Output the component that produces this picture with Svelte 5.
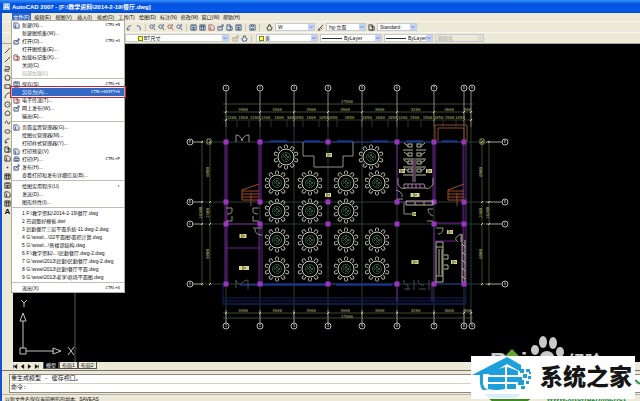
<script>
  const menus = ['文件(F)', '编辑(E)', '视图(V)', '插入(I)', '格式(O)', '工具(T)', '绘图(D)', '标注(N)', '修改(M)', '窗口(W)', '帮助(H)'];

  const fileMenu = [
    [
      { label: '新建(N)...', key: 'CTRL+N', icon: 'page' },
      { label: '新建图纸集(W)...' },
      { label: '打开(O)...', key: 'CTRL+O', icon: 'open' },
      { label: '打开图纸集(E)...' },
      { label: '加载标记集(K)...', icon: 'mark' },
      { label: '关闭(C)' },
      { label: '局部加载(L)', off: true }
    ],
    [
      { label: '保存(S)', key: 'CTRL+S', icon: 'save' },
      { label: '另存为(A)...', key: 'CTRL+SHIFT+S', active: true },
      { label: '电子传递(T)...', icon: 'mark' },
      { label: '网上发布(W)...', icon: 'open' },
      { label: '输出(E)...' }
    ],
    [
      { label: '页面设置管理器(G)...', icon: 'page' },
      { label: '绘图仪管理器(M)...' },
      { label: '打印样式管理器(Y)...' },
      { label: '打印预览(V)', icon: 'page' },
      { label: '打印(P)...', key: 'CTRL+P', icon: 'print' },
      { label: '发布(H)...', icon: 'open' },
      { label: '查看打印和发布详细信息(B)...' }
    ],
    [
      { label: '绘图实用程序(U)', key: '▸' },
      { label: '发送(D)...' },
      { label: '图形特性(I)...' }
    ],
    [
      { label: '1 F:\\教学资料\\2014-2-19\\餐厅.dwg' },
      { label: '2 已调整好模板.dwt' },
      { label: '3 民勤餐厅三层平面系统-11.dwg-2.dwg' },
      { label: '4 G:\\wsw\\...\\02平面图\\面积计算.dwg' },
      { label: '5 G:\\wsw\\...\\售楼部结构.dwg' },
      { label: '6 F:\\教学资料\\...\\民勤餐厅.dwg-2.dwg' },
      { label: '7 G:\\wsw\\2013\\民勤\\民勤餐厅.dwg-2.dwg' },
      { label: '8 G:\\wsw\\2013\\民勤\\餐厅平面.dwg' },
      { label: '9 G:\\wsw\\2013\\老李\\商场平面图.dwg' }
    ],
    [{ label: '退出(X)', key: 'CTRL+Q' }]
  ];

  const icons = {
    page: 'M1 1H5L7 3V7H1Z M3 3V7',
    open: 'M1 3H6V7H1Z M3 5L7 1M5 1H7V3',
    mark: 'M1 1H5V7H1Z M3 3H7V7H3',
    save: 'M1 1H7V7H1Z M3 1V3H5V1 M3 7V5H5V7',
    print: 'M2 3V1H6V3 M1 3H7V6H1Z M2 5H6',
    undo: 'M2 7Q1 2 6 2M2 7L1 5M2 7L4 6',
    redo: 'M2 2Q7 2 6 7',
    zoom: 'M1 3A2 2 0 1 1 5 3A2 2 0 1 1 1 3M5 4L7 7M6 0V3',
    pan: 'M2 7L1 4L3 3V1L5 1V3L7 4L6 7Z',
    table: 'M1 1H7V7H1Z M3 1V7M5 1V7M1 3H7',
    calc: 'M1 1H7V7H1Z M2 2H6M2 4H6M2 6H6M4 4V7',
    pen: 'M1 7L7 1M1 7H4M4 4L6 6',
    line: 'M1 7L7 1',
    pline: 'M1 2H6V5H1V7H6',
    poly: 'M4 1L7 3L6 7H2L1 3Z',
    rect: 'M1 2H7V6H1Z',
    arc: 'M1 7Q2 1 7 1',
    circle: 'M1 4A3 3 0 1 1 7 4A3 3 0 1 1 1 4M4 4H5',
    cloud: 'M2 6Q0 4 2 2Q4 0 6 2Q8 4 6 6Z',
    spline: 'M1 5Q3 0 4 4T7 3',
    ellipse: 'M1 4A3 2 0 1 1 7 4A3 2 0 1 1 1 4',
    point: 'M4 3V5M3 4H5'
  };

  const standardTools = [
    ['undo', 'redo'],
    ['zoom', 'zoom', 'zoom', 'zoom'],
    ['calc', 'table', 'page', 'open', 'mark', 'calc'],
    ['save']
  ];
  const drawTools = ['line', 'line', 'pline', 'poly', 'rect', 'arc', 'circle', 'cloud', 'spline', 'ellipse', 'undo', 'mark', 'page', 'point', 'table', 'calc', 'page', 'table'];

  // column axes and row axes of the plan
  const cols = [226, 260, 294, 328, 362, 397, 434, 464, 471];
  const rows = [142, 202, 224, 284];
  const colNames = ['1', '2', '3', '4', '5', '6', '7', '8', '9'];
  const rowNames = ['E', 'D', 'C', 'A'];
  const spans = ['3900', '3900', '3900', '3900', '3900', '4200', '3600', '500'];
  const vSpans = ['6900', '2400', '6900'];
  const fine = [
    [226, 237, '1200'], [237, 249, '1500'], [249, 260, '1200'], [260, 271, '1200'], [271, 287, '1800'],
    [287, 294, '900'], [294, 303, '1050'], [303, 319, '1800'], [319, 328, '1050'], [328, 337, '1050'],
    [337, 362, '2850'], [362, 372, '1050'], [372, 388, '1800'], [388, 397, '1050'], [397, 408, '1200'],
    [408, 421, '1500'], [421, 434, '1500'], [434, 443, '1050'], [443, 456, '1500'], [456, 464, '1050']
  ];
  const pillars = rows.flatMap((y) => [226, 260, 328, 397, 434, 464].map((x) => [x, y]));
  const tables = [
    [286, 157], [371, 157],
    ...[183, 240, 269].flatMap((y) => [277, 310, 346, 377].map((x) => [x, y])),
    [277, 211], [310, 211], [346, 211]
  ];
  const chairs = [0, 36, 72, 108, 144, 180, 216, 252, 288, 324];
  const stalls = [146, 155, 163, 171];
  const rooms = [
    [329, 155, 6], [328, 195, 6], [243, 236, 7], [244, 268, 10], [402, 171, 6], [429, 171, 6],
    [415, 195, 9], [414, 214, 4], [415, 262, 7], [450, 232, 6], [454, 262, 6]
  ];
</script>

{#snippet icon(name, tone)}
  <svg class="icon {tone}" viewBox="0 0 8 8" aria-hidden="true"><path d={icons[name]} /></svg>
{/snippet}

{#snippet combo(label, value, size, mark, off)}
  <label class="combo {size}">
    <select aria-label={label} class={mark} disabled={off}><option>{value}</option></select>
    {#if mark === 'swatch'}<i class="chip"></i>{/if}
    {#if mark === 'stroke'}<i class="dash"></i>{/if}
    <svg class="arrow" viewBox="0 0 6 8" aria-hidden="true"><path d="M1 3L3 5L5 3" /></svg>
  </label>
{/snippet}

<div class="window">
  <header class="title">
    <svg class="app" viewBox="0 0 8 8" aria-hidden="true"><path d="M0 0H8V8H0Z" fill="#8fb4e6" /><path d="M1 7L4 1L7 7M2 5H6" fill="none" stroke="#fff" /></svg>
    <span>AutoCAD 2007 - [F:\教学资料\2014-2-19\餐厅.dwg]</span>
  </header>

  <nav class="menubar">
    {#each menus as name, i}
      <button class:open={i === 0}>{name}</button>
    {/each}
  </nav>

  <div class="bar">
    {#each standardTools as group}
      <div class="group">
        {#each group as name, i}{@render icon(name, i % 4 === 2 ? 'red' : 'blue')}{/each}
      </div>
    {/each}
    <div class="styles">
      {@render icon('pan', 'dark')}{@render combo('文字样式', 'W', 'small', '', false)}
      {@render icon('pen', 'dark')}{@render combo('标注样式', 'hg-立面', 'small', '', false)}
      {@render icon('mark', 'dark')}{@render combo('表格样式', 'Standard', 'small', '', false)}
    </div>
  </div>

  <div class="bar second">
    {@render combo('图层', 'BT尺寸', 'layer', 'swatch', false)}
    <div class="group">{@render icon('open', 'dim')}{@render icon('pan', 'blue')}</div>
    {@render combo('颜色', '黄', 'medium', 'swatch', false)}
    {@render combo('线型', 'ByLayer', 'medium', 'stroke', false)}
    {@render combo('线宽', 'ByLayer', 'normal', 'stroke', false)}
    {@render combo('打印样式', '随颜色', 'normal', '', true)}
  </div>

  <main class="work">
    <aside class="tools">
      {#each drawTools as name}
        <button aria-label={name}>{@render icon(name, 'dark')}</button>
      {/each}
      <button aria-label="多行文字">A</button>
    </aside>

    <svg class="plan" viewBox="13 44 627 318" role="img" aria-label="餐厅平面图">
      <g class="ucs">
        <path class="faint" d="M75 44V362" />
        <path d="M20 348H26V354H20ZM23 348V321M26 351H54M20 321L23 313L26 321ZM53 348V354L61 351Z" />
        <path d="M21 300L24 303L27 300M24 303V307M68 347L74 355M74 347L68 355" />
      </g>

      <g class="axis">
        {#each cols as x}<path d="M{x} 127V325" />{/each}
        {#each rows as y}<path d="M195 {y}H500" />{/each}
      </g>

      <g class="dims">
        <path d="M223 104H473M223 112H473M223 313H473M223 318H473M202 140V286M210 140V286M482 140V286M489 140V286" />
        <path class="soft" d="M223 120H473" />
        {#each cols as x, i}
          <path class="bright" d="M{x} 91V127M{x} 310V323" />
          <path class="tick" d="M{x - 1} 113L{x + 1} 111M{x - 1} 121L{x + 1} 119M{x - 1} 314L{x + 1} 312" />
          <circle cx={i === 8 ? 472 : x} cy="88" r="3" />
          <circle cx={i === 8 ? 472 : x} cy="326" r="3" />
          <text class="name" x={i === 8 ? 472 : x} y="89">{colNames[i]}</text>
          <text class="name" x={i === 8 ? 472 : x} y="327">{colNames[i]}</text>
        {/each}
        {#each rows as y, i}
          <path class="bright" d="M192 {y}H203M486 {y}H502" />
          <path class="tick" d="M201 {y + 1}L203 {y - 1}M209 {y + 1}L211 {y - 1}M481 {y + 1}L483 {y - 1}M488 {y + 1}L490 {y - 1}" />
          <circle cx="190" cy={y} r="3" />
          <circle cx="505" cy={y} r="3" />
          <text class="name" x="190" y={y + 1}>{rowNames[i]}</text>
          <text class="name" x="505" y={y + 1}>{rowNames[i]}</text>
        {/each}
        <text x="347" y="103">27000</text>
        <text x="347" y="318">27000</text>
        {#each spans as s, i}
          <text x={(cols[i] + cols[i + 1]) / 2} y="111">{s}</text>
          <text x={(cols[i] + cols[i + 1]) / 2} y="312">{s}</text>
        {/each}
        {#each fine as [a, b, s]}
          <path class="soft" d="M{b} 119V127" />
          <text x={(a + b) / 2} y="119">{s}</text>
        {/each}
        {#each vSpans as s, i}
          <text transform="translate(209 {(rows[i] + rows[i + 1]) / 2}) rotate(-90)">{s}</text>
          <text transform="translate(482 {(rows[i] + rows[i + 1]) / 2}) rotate(-90)">{s}</text>
        {/each}
        <text transform="translate(202 213) rotate(-90)">16200</text>
        <text transform="translate(489 213) rotate(-90)">16200</text>
        <path class="zero" d="M207 139H211V144H207ZM480 139H484V144H480Z" />
      </g>

      <g class="glass">
        <path d="M260 142H464M260 284H397M434 284H464" />
        <path class="lit" d="M270 141H287M304 141H320M337 141H353M372 141H388M406 141H423M442 141H457M240 285H328M336 285H392" />
        <path class="step" d="M223 284V304H466V284M223 298H466M223 301H466M223 304H466" />
      </g>

      <g class="wall">
        <path d="M225 142V284M227 142V284M259 142V202M261 142V202M226 224H260M259 224V284M262 224V284M226 248H260M397 142V202M397 202H434M433 142V202M435 142V202M434 223H464M463 142V284M466 142V284M434 224V284M397 284V301M432 284V301M434 241H456" />
        {#each pillars as [x, y]}<rect x={x - 2.5} y={y - 2.5} width="5" height="5" />{/each}
      </g>

      <g class="stairs">
        <path d="M435 142V125H467V141M438 141V128H464V141" />
        <path class="red" d="M242 190V200H259M242 190L259 184M242 191H259M242 194H259M242 197H259M448 190V200H464M448 190L464 184M448 191H464M448 194H464M448 197H464" />
        <path d="M251 193V206M457 193V206" />
      </g>

      <g class="doors">
        <path d="M236 142V135Q241 135 242 141Q243 135 249 135V142M226 208H232V212Q232 214 227 214M226 221H232V216M259 208H253V212Q253 214 258 214M259 221H253V216M253 228H262M255 229Q255 235 262 235" />
        <path d="M303 142V156H314V167H343V156H353V142" />
        <path class="soft" d="M236 288V280Q236 284 241 284Q243 280 248 280V289M404 280Q403 285 408 285V290M414 280V290M418 280Q419 286 424 285M429 280V290M404 289H410M419 289H426" />
        <path d="M433 209H428Q428 214 433 216M433 221H427M436 228H443Q443 234 438 234M458 242Q452 238 461 234V242M404 203V214H412M397 199H403M398 178V184Q400 190 406 188M396 190Q403 192 402 197M433 178V184Q430 190 425 188" />
      </g>

      <g class="fixtures">
        {#each stalls as y}
          <path d="M403 {y + 4}H413M416 {y + 4}H426M404 {y - 3}L408 {y}M425 {y - 3}L421 {y}" />
          <rect x="408" y={y - 2} width="4" height="3" />
          <rect x="417" y={y - 2} width="4" height="3" />
        {/each}
        <path class="pink" d="M413 158V182M415 158V182M404 184H424L425 188H404ZM408 184V188M412 184V188M416 184V188M420 184V188" />
        <path d="M406 201H433V205H406ZM415 202V205M424 202V205" />
        <path d="M436 242H443V282H436ZM436 247H443M436 276H443M439 249V275M442 249V275M444 255H448V259H444M444 265H448V269H444" />
        <path d="M462 234V282M465 240V282M462 244L465 247M462 252L465 255M462 260L465 263M462 268L465 271M462 276L465 279" />
      </g>

      <g class="rooms">
        {#each rooms as [x, y, w]}
          <rect x={x - w / 2} y={y - 2} width={w} height="4" />
          <path d="M{x - 1} {y - 2}V{y + 2}M{x + 1} {y - 1}V{y + 1}" />
        {/each}
      </g>

      {#each tables as [x, y]}
        <g class="dining" transform="translate({x} {y})">
          {#each chairs as a}<path d="M-1.5 -9V-11.5Q0 -13 1.5 -11.5V-9" transform="rotate({a})" />{/each}
          <circle r="8" />
          <circle class="inner" r="4.5" />
          <path class="inner" d="M-3 -2L2 3M-1 -3L3 1M-3 1L1 -3M-1 3L3 -1" />
        </g>
      {/each}
    </svg>
  </main>

  <div class="tabs">
    <span class="moves">
      {#each ['M1 1V7M6 1L2 4L6 7Z', 'M6 1L2 4L6 7Z', 'M2 1L6 4L2 7Z', 'M7 1V7M2 1L6 4L2 7Z'] as d}
        <button aria-label="滚动"><svg viewBox="0 0 8 8"><path {d} stroke="#000" /></svg></button>
      {/each}
    </span>
    <button class="tab on">模型</button>
    <button class="tab">布局1</button>
    <button class="tab">布局2</button>
  </div>

  <section class="command">
    <div class="log">重生成模型 - 缓存视口。</div>
    <label class="prompt">命令: <input type="text" aria-label="命令" /></label>
  </section>

  <footer class="status">以新文件名保存当前图形的副本:&nbsp; SAVEAS</footer>

  <div class="dropdown">
    {#each fileMenu as group}
      <div class="section">
        {#each group as item}
          <button class="item" class:active={item.active} disabled={item.off}>
            <span class="pic">{#if item.icon}{@render icon(item.icon, item.icon === 'mark' ? 'red' : 'blue')}{/if}</span>
            <span class="label">{item.label}</span>
            {#if item.key}<kbd>{item.key}</kbd>{/if}
          </button>
        {/each}
      </div>
    {/each}
  </div>

  <svg class="brand" viewBox="470 330 170 71" role="img" aria-label="系统之家">
    <g fill="#c9c9c9">
      <ellipse cx="543" cy="339" rx="4" ry="6" />
      <ellipse cx="553" cy="340" rx="4" ry="6" />
      <ellipse cx="535" cy="347" rx="4" ry="5" />
      <ellipse cx="560" cy="349" rx="4" ry="5" />
      <ellipse cx="547" cy="354" rx="7" ry="6" />
      <text x="490" y="367" class="bd">Bai</text>
      <text x="568" y="365" class="jy">经验</text>
    </g>
    <path d="M505 353L512 346L519 353Z" fill="#63a62f" />
    <path d="M489 395H531Q529 399 522 399H498Q490 399 489 395Z" fill="#3d8a1f" />
    <text x="547" y="398" class="url">www.xitongzhijia.net</text>
    <path d="M635 377L640 381" stroke="#2a9a50" stroke-width="2" />
    <rect x="471" y="353" width="164" height="43" fill="#fff" />
    <g fill="#1d9fdc">
      <path d="M472 372L507 354L521 362V369L507 361L490 371H483V380Q483 385 488 387H483Q479 384 480 372Z" />
      <path d="M491 368L505 364V372H489ZM507 364L518 368V372H507ZM488 374H505V379H488ZM507 374H522V379H507ZM488 381H505V386Q496 388 488 386ZM507 381H516V386H507Z" />
      <path d="M520 366H524V370H520ZM526 366H530V369H526ZM523 371H527V375H523ZM528 373H531V376H528ZM518 377H524V382H518ZM526 378H529V381H526ZM521 383H525V386H521ZM529 369H531V371H529Z" />
    </g>
    <path d="M484 391H522L516 395H490Z" fill="#d9f0fb" />
    <text x="540" y="382" class="cn">系统之家</text>
  </svg>
</div>

<style>
  :global(body) {
    margin: 0;
    background: #ece9d8;
  }
  .window {
    position: relative;
    display: flex;
    flex-direction: column;
    border-left: 2px solid #1550d8;
    background: #ece9d8;
    color: #111;
    font: 5px/8px "Liberation Sans", "Noto Sans CJK SC", sans-serif;
  }
  button, select, input, kbd {
    margin: 0;
    padding: 0;
    border: 0;
    background: none;
    color: inherit;
    font: inherit;
  }
  svg { display: block; }

  .title {
    display: flex;
    align-items: center;
    gap: 2px;
    height: 13px;
    margin-left: -2px;
    padding: 0 3px;
    background: linear-gradient(#3a93ff 0, #1c6ff2 2px, #0450dc 4px, #0659ea 10px, #0348c8 13px);
    color: #fff;
    font: bold 6px/12px "Liberation Sans", "Noto Sans CJK SC", sans-serif;
  }
  .app { width: 7px; height: 7px; }

  .menubar {
    display: flex;
    gap: 2px;
    height: 8px;
    padding-left: 10px;
  }
  .menubar button {
    flex: 0 0 19px;
    line-height: 7px;
    white-space: nowrap;
  }
  .menubar .open {
    background: #316ac5;
    color: #fff;
  }

  .bar {
    display: flex;
    align-items: center;
    height: 11px;
    padding-left: 123px;
    border-top: 1px solid #f8f6ee;
    box-sizing: border-box;
  }
  .group {
    display: flex;
    gap: 2px;
    padding: 0 3px 0 1px;
    margin-right: 2px;
    border-right: 1px solid #c9c5b2;
  }
  .styles {
    display: flex;
    align-items: center;
    gap: 2px;
    padding-left: 4px;
  }
  .second {
    height: 12px;
    gap: 2px;
    border-bottom: 1px solid #aca899;
  }
  .icon {
    flex: none;
    width: 7px;
    height: 7px;
    fill: none;
    stroke: #333;
    stroke-width: 1;
  }
  .icon.blue { stroke: #44597a; fill: #dfe9f5; }
  .icon.red { stroke: #9a5a5a; fill: #f3e4e0; }
  .icon.dim { stroke: #aaa694; }

  .combo {
    position: relative;
    display: flex;
    height: 8px;
    background: #fff;
    outline: 1px solid #c6cbd0;
    outline-offset: -1px;
  }
  .combo.small { width: 40px; }
  .combo.normal { width: 49px; }
  .combo.medium { width: 62px; }
  .combo.layer { width: 104px; }
  .combo select {
    width: 100%;
    padding-left: 3px;
    appearance: none;
    line-height: 8px;
    opacity: 1;
  }
  .combo .swatch { padding-left: 9px; }
  .combo .stroke { padding-left: 24px; }
  .layer .swatch { padding-left: 19px; }
  .combo:has(select:disabled) { background: #ece9d8; color: #aca899; }
  .combo .arrow {
    position: absolute;
    right: 1px;
    top: 1px;
    width: 6px;
    height: 6px;
    background: #c3d3fb;
    fill: none;
    stroke: #4d6185;
    pointer-events: none;
  }
  .combo:has(select:disabled) .arrow { background: #e4e1d2; stroke: #bbb; }
  .chip {
    position: absolute;
    left: 3px;
    top: 2px;
    width: 3px;
    height: 3px;
    border: 1px solid #7d8a00;
    background: #ffff6a;
  }
  .layer .chip { left: 13px; }
  .dash {
    position: absolute;
    left: 2px;
    top: 4px;
    width: 20px;
    border-top: 1px solid #333;
  }

  .work { display: flex; background: #000; }
  .tools {
    flex: 0 0 11px;
    display: flex;
    flex-direction: column;
    align-items: center;
    gap: 1px;
    padding-top: 2px;
    box-sizing: border-box;
    background: #ece9d8;
  }
  .tools button {
    height: 8px;
    font-weight: bold;
    font-size: 8px;
  }
  .plan {
    flex: 1;
    min-width: 0;
    background: #000;
    fill: none;
    stroke-width: 1;
  }
  .ucs { stroke: #c4c4c4; }
  .ucs .faint { stroke: #5a5a5a; }
  .axis { stroke: #243f35; }
  .dims { stroke: #3d4a2c; }
  .dims .soft { stroke: #2b3524; }
  .dims .bright { stroke: #87897a; }
  .dims .tick { stroke: #d8dca0; }
  .dims .zero { stroke: #8d9150; }
  .dims circle { stroke: #b9b9b9; }
  .dims text {
    fill: #b3b77c;
    stroke: none;
    text-anchor: middle;
    font: 4px "DejaVu Sans Mono", monospace;
  }
  .dims .name { fill: #ccc; }
  .glass { stroke: #14308c; }
  .glass .lit { stroke: #1d48d0; }
  .glass .step { stroke: #10205e; }
  .wall { stroke: #6c1f8c; }
  .wall rect { fill: #9a35c0; stroke: none; }
  .stairs { stroke: #8a4a2a; }
  .stairs .red { stroke: #a34a2c; }
  .doors { stroke: #8f9282; }
  .doors .soft { stroke: #4a4d52; }
  .fixtures { stroke: #b5b69a; }
  .fixtures .pink { stroke: #a97aa8; }
  .rooms rect { fill: #d6d68a; }
  .rooms path { stroke: #55552c; }
  .dining { stroke: #d2d6c4; }
  .dining path { stroke: #a0a694; }
  .dining .inner { stroke: #2f5c46; }

  .tabs {
    display: flex;
    height: 8px;
    padding-left: 11px;
    border-bottom: 1px solid #77756a;
  }
  .moves { display: flex; gap: 2px; margin-right: 4px; }
  .moves button { width: 5px; }
  .moves svg { width: 5px; height: 5px; }
  .tab {
    height: 7px;
    padding: 0 2px;
    border: 1px solid #555;
    border-top: 0;
    line-height: 6px;
  }
  .tab.on { background: #000; color: #fff; }

  .command {
    margin: 3px 0 1px 7px;
    padding-left: 1px;
    border: 1px solid #8b897e;
    border-right: 0;
    background: #fff;
    font: 6px/8px "Liberation Mono", "Noto Sans CJK SC", monospace;
  }
  .log { height: 8px; border-bottom: 1px solid #d5d2c4; }
  .prompt { display: flex; height: 8px; }
  .prompt input { flex: 1; min-width: 0; height: 8px; }
  .status {
    height: 9px;
    padding-left: 3px;
    border-top: 1px solid #b5b2a2;
    line-height: 8px;
  }

  .dropdown {
    position: absolute;
    left: 9px;
    top: 20px;
    width: 114px;
    border: 1px solid #b0ada0;
    box-sizing: border-box;
    background: #fff;
  }
  .section + .section {
    padding-top: 1px;
    margin-top: 1px;
    border-top: 1px solid #c2c0b6;
  }
  .item {
    display: flex;
    align-items: center;
    width: 100%;
    height: 8px;
    padding-right: 4px;
    text-align: left;
    white-space: nowrap;
  }
  .item.active {
    background: #316ac5;
    color: #fff;
    outline: 1px solid #c8203c;
    outline-offset: 1px;
  }
  .item:disabled { color: #aca899; }
  .pic { flex: 0 0 9px; padding-left: 1px; }
  .label { flex: 1; }
  kbd { font: 4px/8px "DejaVu Sans Mono", monospace; }

  .brand {
    position: absolute;
    right: 0;
    bottom: 0;
    width: 170px;
    height: 71px;
  }
  .bd { font: bold 24px "Liberation Sans", sans-serif; }
  .jy { font: bold 17px "Noto Sans CJK SC", sans-serif; }
  .url { font: italic bold 8px "Liberation Sans", sans-serif; fill: #1f8a45; }
  .cn { font: 900 23px "Noto Sans CJK SC", sans-serif; fill: #151515; }
</style>
